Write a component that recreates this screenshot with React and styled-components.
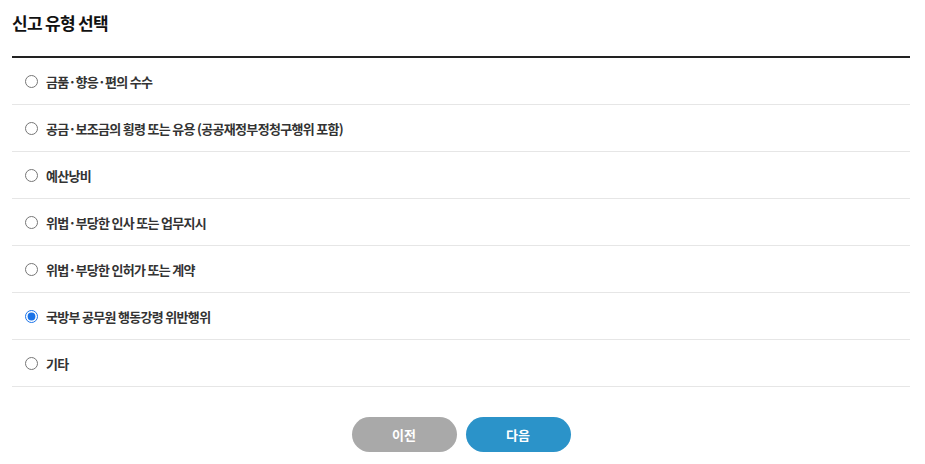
import React, { useState } from "react";
import styled, { createGlobalStyle } from "styled-components";

const GlobalStyle = createGlobalStyle`
  body {
    margin: 0;
    background: #fff;
    font-family: "Noto Sans CJK KR", "Noto Sans", sans-serif;
    color: #222;
  }
`;

const Page = styled.div`
  width: 898px;
  margin-left: 12px;
`;

const Title = styled.h2`
  margin: 0;
  height: 58px;
  padding-top: 10px;
  box-sizing: border-box;
  font-size: 17px;
  font-weight: 700;
  line-height: 26px;
  letter-spacing: -0.7px;
  color: #111;
  border-bottom: 2px solid #222;
`;

const List = styled.ul`
  list-style: none;
  margin: 0;
  padding: 0;
`;

const Row = styled.li`
  height: 46px;
  display: flex;
  align-items: center;
  border-bottom: 1px solid #e6e6e6;
  padding-left: 13px;
`;

const Label = styled.label`
  display: flex;
  align-items: center;
  gap: 8px;
  font-size: 13px;
  font-weight: 700;
  color: #333;
  letter-spacing: -0.7px;
  cursor: pointer;
`;

const Radio = styled.input`
  width: 13px;
  height: 13px;
  margin: 0;
  accent-color: #1a73e8;
`;

const Buttons = styled.div`
  display: flex;
  justify-content: center;
  gap: 9px;
  margin-top: 30px;
`;

const Button = styled.button`
  width: 105px;
  height: 35px;
  border: none;
  border-radius: 18px;
  background: ${(p) => (p.primary ? "#2b93c9" : "#a9a9a9")};
  color: #fff;
  font-family: inherit;
  font-size: 13px;
  font-weight: 700;
  cursor: pointer;
`;

const types = [
  "금품·향응·편의 수수",
  "공금·보조금의 횡령 또는 유용 (공공재정부정청구행위 포함)",
  "예산낭비",
  "위법·부당한 인사 또는 업무지시",
  "위법·부당한 인허가 또는 계약",
  "국방부 공무원 행동강령 위반행위",
  "기타",
];

const App = () => {
  const [selected, setSelected] = useState(5);

  return (
    <Page>
      <GlobalStyle />
      <Title>신고 유형 선택</Title>
      <List>
        {types.map((t, i) => (
          <Row key={i}>
            <Label>
              <Radio
                type="radio"
                name="reportType"
                checked={selected === i}
                onChange={() => setSelected(i)}
              />
              {t}
            </Label>
          </Row>
        ))}
      </List>
      <Buttons>
        <Button>이전</Button>
        <Button primary>다음</Button>
      </Buttons>
    </Page>
  );
};

export default App;
